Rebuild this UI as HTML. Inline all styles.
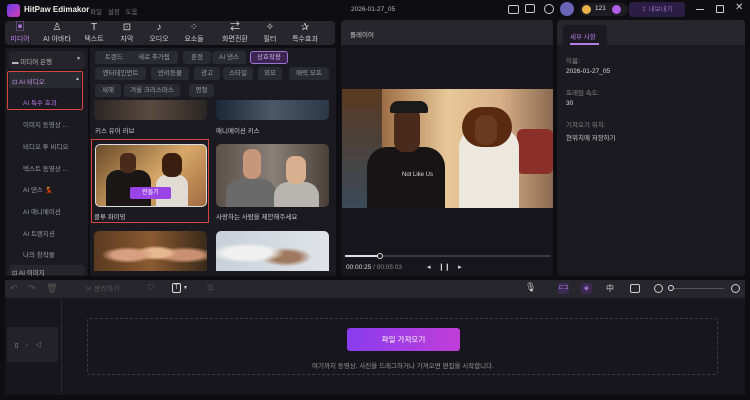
<!DOCTYPE html>
<html><head><meta charset="utf-8"><style>
*{margin:0;padding:0;box-sizing:border-box}
body{width:750px;height:400px;background:#0e0e12;font-family:"Liberation Sans","Noto Sans CJK KR",sans-serif;color:#ccc;position:relative;overflow:hidden;font-size:7px}
.a{position:absolute}
.tag{position:absolute;height:13px;background:#2a2a31;border-radius:3px;color:#9a9aa2;font-size:6.5px;line-height:13px;text-align:center}
.nav{position:absolute;top:21px;width:34px;text-align:center;color:#c8c8cc;font-size:7px}
.nav i{display:block;height:13px;font-style:normal;font-size:10px;line-height:13px;color:#ddd}
.side{position:absolute;left:23px;color:#9a9aa2;font-size:6.5px}
.ph{position:absolute;border-radius:5px;overflow:hidden}
.lbl{position:absolute;font-size:6.5px;color:#c8c8cc}
.v{position:absolute}
</style></head><body>
<div class="a" style="left:7px;top:4px;width:13px;height:13px;border-radius:3px;background:linear-gradient(135deg,#6a3cf0,#d23fb0)"></div>
<div class="a" style="left:24px;top:5px;font-size:8px;font-weight:bold;color:#eee">HitPaw Edimakor</div>
<div class="a" style="left:90px;top:6px;font-size:6.5px;color:#777;word-spacing:4px">파일 설정 도움</div>
<div class="a" style="left:351px;top:6px;font-size:6.5px;color:#bbb">2026-01-27_05</div>
<div class="a" style="left:508px;top:5px;width:11px;height:9px;border:1px solid #ccc;border-radius:2px"></div>
<div class="a" style="left:525px;top:4px;width:10px;height:9px;border:1px solid #ccc;border-radius:2px"></div>
<div class="a" style="left:544px;top:4px;width:10px;height:10px;border:1px solid #ccc;border-radius:50%"></div>
<div class="a" style="left:560px;top:2px;width:14px;height:14px;border-radius:50%;background:#6a64b8"></div>
<div class="a" style="left:580px;top:3px;width:48px;height:13px;border-radius:7px;background:#1c1c22"></div>
<div class="a" style="left:582px;top:5px;width:9px;height:9px;border-radius:50%;background:#e9b24a"></div>
<div class="a" style="left:595px;top:5px;font-size:6.5px;color:#ddd">121</div>
<div class="a" style="left:612px;top:5px;width:9px;height:9px;border-radius:50%;background:#b25ee8"></div>
<div class="a" style="left:629px;top:2px;width:56px;height:15px;border-radius:3px;background:#2c1d44;color:#8a6fb8;font-size:6.5px;line-height:15px;text-align:center">⇪ 내보내기</div>
<div class="a" style="left:696px;top:9px;width:8px;height:1px;background:#ccc"></div>
<div class="a" style="left:716px;top:5px;width:8px;height:8px;border:1px solid #ccc;border-radius:1px"></div>
<div class="a" style="left:735px;top:2px;font-size:10px;color:#ccc">✕</div>
<div class="a" style="left:5px;top:21px;width:330px;height:24px;background:#26262c;border-radius:4px"></div>
<div class="nav" style="left:3px;color:#b77ce8"><i style="color:#b77ce8">▣</i>미디어</div>
<div class="nav" style="left:40px"><i>♙</i>AI 아바타</div>
<div class="nav" style="left:77px"><i>T</i>텍스트</div>
<div class="nav" style="left:110px"><i>⊡</i>자막</div>
<div class="nav" style="left:142px"><i>♪</i>오디오</div>
<div class="nav" style="left:177px"><i>⁘</i>요소들</div>
<div class="nav" style="left:215px;width:40px"><i>⇄</i>화면전환</div>
<div class="nav" style="left:253px"><i>✧</i>필터</div>
<div class="nav" style="left:288px"><i>✰</i>특수효과</div>
<div class="a" style="left:5px;top:48px;width:83px;height:228px;background:#1a1a20"></div>
<div class="a" style="left:9px;top:51px;width:76px;height:18px;background:#24242a;border-radius:4px"></div>
<div class="a" style="left:12px;top:56px;font-size:6.5px;color:#bbb">▬ 미디어 은행</div>
<div class="a" style="left:76px;top:56px;font-size:5px;color:#bbb">▼</div>
<div class="a" style="left:7px;top:71px;width:76px;height:39px;border:1.5px solid #d9463f;border-radius:2px"></div>
<div class="a" style="left:9px;top:72px;width:72px;height:16px;background:#2a2a31"></div>
<div class="a" style="left:12px;top:76px;font-size:6.5px;color:#c692f0">⊡ AI 비디오</div>
<div class="a" style="left:75px;top:76px;font-size:5px;color:#bbb">▲</div>
<div class="side" style="top:97px;color:#b77ce8">AI 특수 효과</div>
<div class="side" style="top:119px">이미지 동영상 ...</div>
<div class="side" style="top:141px">비디오 투 비디오</div>
<div class="side" style="top:163px">텍스트 동영상 ...</div>
<div class="side" style="top:184px">AI 댄스 💃</div>
<div class="side" style="top:206px">AI 애니메이션</div>
<div class="side" style="top:228px">AI 트랜지션</div>
<div class="side" style="top:249px">나의 창작물</div>
<div class="a" style="left:9px;top:265px;width:76px;height:10px;background:#26262c;border-radius:4px 4px 0 0"></div>
<div class="a" style="left:12px;top:267px;font-size:6.5px;color:#bbb">⊡ AI 이미지</div>
<div class="a" style="left:90px;top:48px;width:246px;height:228px;background:#1a1a20"></div>
<div class="tag" style="left:95px;top:51px;width:38px">트렌드</div>
<div class="tag" style="left:130px;top:51px;width:48px">새로 추가됨</div>
<div class="tag" style="left:183px;top:51px;width:28px">훈점</div>
<div class="tag" style="left:212px;top:51px;width:34px">AI 댄스</div>
<div class="tag" style="left:250px;top:51px;width:38px;background:#3a2650;border:1px solid #a070d0;color:#d8b8f5;line-height:11px">상호작용</div>
<div class="tag" style="left:95px;top:67px;width:51px">엔터테인먼트</div>
<div class="tag" style="left:151px;top:67px;width:38px">반려동물</div>
<div class="tag" style="left:194px;top:67px;width:26px">광고</div>
<div class="tag" style="left:223px;top:67px;width:30px">스타일</div>
<div class="tag" style="left:258px;top:67px;width:24px">외모</div>
<div class="tag" style="left:289px;top:67px;width:40px">매릭 모프</div>
<div class="tag" style="left:95px;top:84px;width:26px">새해</div>
<div class="tag" style="left:124px;top:84px;width:56px">겨울 크리스마스</div>
<div class="tag" style="left:189px;top:84px;width:25px">명절</div>
<div class="ph" style="left:94px;top:100px;width:113px;height:20px;border-radius:0 0 5px 5px;background:linear-gradient(90deg,#2a2624,#5a4a40,#2a2624)"></div>
<div class="ph" style="left:216px;top:100px;width:113px;height:20px;border-radius:0 0 5px 5px;background:linear-gradient(90deg,#1a2838,#4a5868,#2a3848)"></div>
<div class="lbl" style="left:95px;top:125px">키스 유어 러브</div>
<div class="lbl" style="left:216px;top:125px">애니메이션 키스</div>
<div class="a" style="left:91px;top:139px;width:118px;height:84px;border:1.5px solid #d9463f"></div>
<div class="ph" style="left:95px;top:144px;width:112px;height:63px;border:1.5px solid #ddd;background:linear-gradient(135deg,#6a4a2a,#d8a868 55%,#a06a40)">
<div class="v" style="left:10px;top:25px;width:45px;height:40px;background:#1a1616;border-radius:12px 12px 0 0"></div>
<div class="v" style="left:24px;top:8px;width:16px;height:20px;background:#4a2a1a;border-radius:6px"></div>
<div class="v" style="left:60px;top:30px;width:32px;height:35px;background:#e0dcd4;border-radius:10px 10px 0 0"></div>
<div class="v" style="left:66px;top:8px;width:20px;height:24px;background:#3a1e10;border-radius:8px"></div>
</div>
<div class="a" style="left:130px;top:187px;width:41px;height:12px;background:#9a44e8;border-radius:2px;color:#fff;font-size:6px;line-height:12px;text-align:center">만들기</div>
<div class="lbl" style="left:94px;top:211px">클루 파이밍</div>
<div class="ph" style="left:216px;top:144px;width:113px;height:63px;background:linear-gradient(90deg,#5a5048,#8a8078,#4a4038)">
<div class="v" style="left:10px;top:35px;width:50px;height:30px;background:#6a6a6a;border-radius:14px 14px 0 0"></div>
<div class="v" style="left:27px;top:5px;width:18px;height:30px;background:#c8967a;border-radius:8px"></div>
<div class="v" style="left:58px;top:38px;width:45px;height:27px;background:#b8b4b0;border-radius:14px 14px 0 0"></div>
<div class="v" style="left:70px;top:12px;width:20px;height:28px;background:#d8b090;border-radius:8px"></div>
</div>
<div class="lbl" style="left:216px;top:211px">사랑하는 사람을 제안해주세요</div>
<div class="ph" style="left:94px;top:231px;width:113px;height:40px;border-radius:5px 5px 0 0;background:radial-gradient(ellipse at 30% 60%,#d8a080 0 14%,transparent 24%),radial-gradient(ellipse at 55% 55%,#e8b890 0 14%,transparent 24%),radial-gradient(ellipse at 80% 60%,#c89070 0 14%,transparent 24%),linear-gradient(90deg,#5a3a20,#8a5a30,#3a2a1a)"></div>
<div class="ph" style="left:216px;top:231px;width:113px;height:40px;border-radius:5px 5px 0 0;background:radial-gradient(ellipse at 28% 55%,#f0f0f0 0 20%,transparent 32%),radial-gradient(ellipse at 62% 65%,#a07a60 0 14%,transparent 26%),linear-gradient(90deg,#c8d0d8,#e0e4e8)"></div>
<div class="a" style="left:341px;top:20px;width:212px;height:256px;background:#16161c;border-radius:4px"></div>
<div class="a" style="left:341px;top:20px;width:212px;height:25px;background:#26262c;border-radius:4px 4px 0 0"></div>
<div class="a" style="left:350px;top:29px;font-size:6.5px;color:#ccc">플레이어</div>
<div class="a" style="left:342px;top:89px;width:211px;height:119px;overflow:hidden;background:linear-gradient(90deg,#4a3020,#a07048 20%,#e8c898 50%,#d8b088 75%,#8a6a50)">
<div class="v" style="left:0;top:0;width:40px;height:119px;background:linear-gradient(180deg,#5a3a20,#3a4a58)"></div>
<div class="v" style="left:175px;top:40px;width:36px;height:45px;background:#8a3028;border-radius:6px"></div>
<div class="v" style="left:25px;top:58px;width:78px;height:62px;background:#161414;border-radius:20px 20px 0 0"></div>
<div class="v" style="left:52px;top:18px;width:26px;height:45px;background:#4a2a1a;border-radius:10px"></div>
<div class="v" style="left:48px;top:12px;width:38px;height:12px;background:#1a1a1a;border-radius:8px 8px 2px 2px"></div>
<div class="v" style="left:60px;top:83px;width:38px;height:7px;color:#ddd;font-size:6px">Not Like Us</div>
<div class="v" style="left:117px;top:40px;width:60px;height:80px;background:#ece8e0;border-radius:18px 18px 0 0"></div>
<div class="v" style="left:120px;top:18px;width:50px;height:40px;background:#5a2a10;border-radius:20px"></div>
<div class="v" style="left:133px;top:26px;width:22px;height:30px;background:#6a3a20;border-radius:10px"></div>
</div>
<div class="a" style="left:345px;top:255px;width:205px;height:1.5px;background:#3a3a40"></div>
<div class="a" style="left:345px;top:255px;width:35px;height:1.5px;background:#ddd"></div>
<div class="a" style="left:377px;top:253px;width:6px;height:6px;border-radius:50%;border:1px solid #ddd;background:#16161c"></div>
<div class="a" style="left:346px;top:264px;font-size:6.5px;color:#ddd">00:00:25 <span style="color:#888">/ 00:05:03</span></div>
<div class="a" style="left:427px;top:263px;font-size:7px;color:#ddd;word-spacing:6px">◂ ❙❙ ▸</div>
<div class="a" style="left:557px;top:20px;width:188px;height:256px;background:#1a1a20;border-radius:4px"></div>
<div class="a" style="left:557px;top:20px;width:188px;height:25px;background:#26262c;border-radius:4px 4px 0 0"></div>
<div class="a" style="left:563px;top:25px;width:44px;height:20px;background:#1a1a20;border-radius:4px 4px 0 0"></div>
<div class="a" style="left:570px;top:31px;font-size:6.5px;color:#b77ce8">세부 사항</div>
<div class="a" style="left:570px;top:43px;width:29px;height:1.5px;background:#b77ce8"></div>
<div class="a" style="left:566px;top:55px;font-size:6.5px;color:#888">이름:</div>
<div class="a" style="left:566px;top:68px;font-size:6.5px;color:#ddd">2026-01-27_05</div>
<div class="a" style="left:566px;top:87px;font-size:6.5px;color:#888">프레임 속도:</div>
<div class="a" style="left:566px;top:100px;font-size:6.5px;color:#ddd">30</div>
<div class="a" style="left:566px;top:119px;font-size:6.5px;color:#888">기쳐오기 위치:</div>
<div class="a" style="left:566px;top:132px;font-size:6.5px;color:#ccc">현위치에 저장하기</div>
<div class="a" style="left:5px;top:280px;width:740px;height:18px;background:#26262c"></div>
<div class="a" style="left:10px;top:283px;font-size:9px;color:#555;word-spacing:8px">↶ ↷ 🗑</div>
<div class="a" style="left:85px;top:284px;font-size:7px;color:#555">✂ 분리하기</div>
<div class="a" style="left:148px;top:283px;font-size:8px;color:#555">⛉</div>
<div class="a" style="left:172px;top:283px;width:9px;height:10px;border:1px solid #ddd;border-radius:2px;font-size:6px;text-align:center;line-height:8px;color:#ddd">T</div>
<div class="a" style="left:183px;top:285px;font-size:5px;color:#ddd">▼</div>
<div class="a" style="left:207px;top:283px;font-size:8px;color:#555">⊡</div>
<div class="a" style="left:525px;top:282px;font-size:9px;color:#ccc">🎙</div>
<div class="a" style="left:558px;top:283px;width:11px;height:11px;background:#3a2a50;border-radius:2px;color:#b77ce8;font-size:6px;text-align:center;line-height:11px">⊏⊐</div>
<div class="a" style="left:581px;top:283px;width:11px;height:11px;background:#3a2a50;border-radius:2px;color:#b77ce8;font-size:7px;text-align:center;line-height:11px">◈</div>
<div class="a" style="left:606px;top:283px;font-size:8px;color:#ccc">中</div>
<div class="a" style="left:630px;top:284px;width:10px;height:9px;border:1px solid #ccc;border-radius:2px"></div>
<div class="a" style="left:654px;top:284px;width:9px;height:9px;border:1px solid #ccc;border-radius:50%"></div>
<div class="a" style="left:668px;top:285px;width:6px;height:6px;border:1.5px solid #ddd;border-radius:50%"></div>
<div class="a" style="left:674px;top:288px;width:50px;height:1px;background:#555"></div>
<div class="a" style="left:731px;top:284px;width:9px;height:9px;border:1px solid #ccc;border-radius:50%"></div>
<div class="a" style="left:5px;top:298px;width:740px;height:97px;background:#16161c"></div>
<div class="a" style="left:61px;top:298px;width:1px;height:97px;background:#26262c"></div>
<div class="a" style="left:7px;top:327px;width:51px;height:35px;background:#222228;border-radius:2px"></div>
<div class="a" style="left:15px;top:340px;font-size:6px;color:#aaa;word-spacing:6px">▯ ◦ ◁</div>
<div class="a" style="left:87px;top:318px;width:631px;height:57px;border:1px dashed #3a3a42;border-radius:3px"></div>
<div class="a" style="left:347px;top:328px;width:113px;height:23px;border-radius:3px;background:linear-gradient(90deg,#8a3cf0,#c03ed8);color:#fff;font-size:7.5px;line-height:23px;text-align:center">파일 가져오기</div>
<div class="a" style="left:287px;top:360px;width:232px;text-align:center;font-size:6.5px;color:#999">여기까지 동영상, 사진을 드래그하거나 가져오면 편집을 시작합니다.</div>
</body></html>
